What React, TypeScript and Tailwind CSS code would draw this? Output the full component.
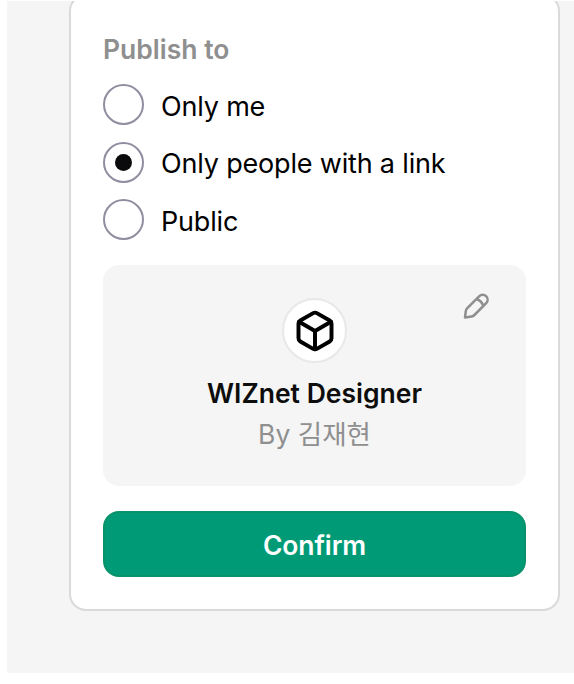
import { Box } from "lucide-react";

const options = [
  { label: "Only me", checked: false },
  { label: "Only people with a link", checked: true },
  { label: "Public", checked: false },
];

function PencilIcon() {
  return (
    <svg width="28" height="28" viewBox="0 0 28 28" fill="none" stroke="#8f8f8f" strokeWidth="2.5" strokeLinejoin="round">
      <path d="M3 25.6L3.8 19Q4.1 17.3 5.3 16.1L17.1 4.3A4.7 4.7 0 0 1 24.2 11.2L12.4 23Q11.2 24.2 9.5 24.6Z" />
      <path d="M14.5 7Q19.5 8.6 21.3 13.9" />
    </svg>
  );
}

export default function App() {
  return (
    <div className="h-[684px] w-[574px] overflow-hidden bg-white pt-px pl-[7px] font-['Inter','Noto_Sans_CJK_KR',sans-serif]">
      <div className="flex h-[672px] items-start overflow-hidden bg-[#f5f5f5] pl-[62px]">
        <div className="-mt-[7px] h-[617px] w-[491px] shrink-0 rounded-[17px] border-2 border-[#dadada] bg-white px-8 pt-[37px]">
          <h2 className="h-8 text-[26.5px] leading-8 font-semibold text-[#8f8f8f]">Publish to</h2>

          <div className="mt-[19px] flex flex-col gap-[16.5px]">
            {options.map((option) => (
              <label key={option.label} className="flex h-[41px] items-center gap-[17px]">
                <span className="flex size-[41px] shrink-0 items-center justify-center rounded-full border-2 border-[#8e8ea0]">
                  {option.checked && <span className="size-[17px] rounded-full bg-[#0a0a0c]" />}
                </span>
                <span className="pt-[4px] text-[27px] leading-8 tracking-[-0.18px] whitespace-nowrap text-black">
                  {option.label}
                </span>
              </label>
            ))}
          </div>

          {/* Profile preview */}
          <div className="mt-[25px] grid h-[221px] grid-cols-[1fr_65px_1fr] content-start rounded-2xl bg-[#f5f5f5] pt-[33px]">
            <div className="col-start-2 flex size-[65px] items-center justify-center rounded-full border-2 border-[#e8e8e8] bg-white">
              <Box size={44} strokeWidth={2.15} color="#000" />
            </div>
            <div className="flex items-start justify-end pr-9">
              <button type="button" aria-label="Edit profile" className="-mt-[6px]">
                <PencilIcon />
              </button>
            </div>
            <div className="col-span-3 mt-[14px] text-center text-[26.5px] leading-8 font-semibold text-[#0d0d0d]">
              WIZnet Designer
            </div>
            <div className="col-span-3 mt-[9px] h-8 text-center text-[26.5px] leading-8 text-[#8f8f8f]">
              By 김재현
            </div>
          </div>

          <button
            type="button"
            className="mt-[25px] flex h-[66px] w-full items-center justify-center rounded-2xl border-2 border-[#08926b] bg-[#009b76] pt-[2px] text-[26.5px] leading-8 font-semibold tracking-[-0.1px] text-white"
          >
            Confirm
          </button>
        </div>
      </div>
    </div>
  );
}
